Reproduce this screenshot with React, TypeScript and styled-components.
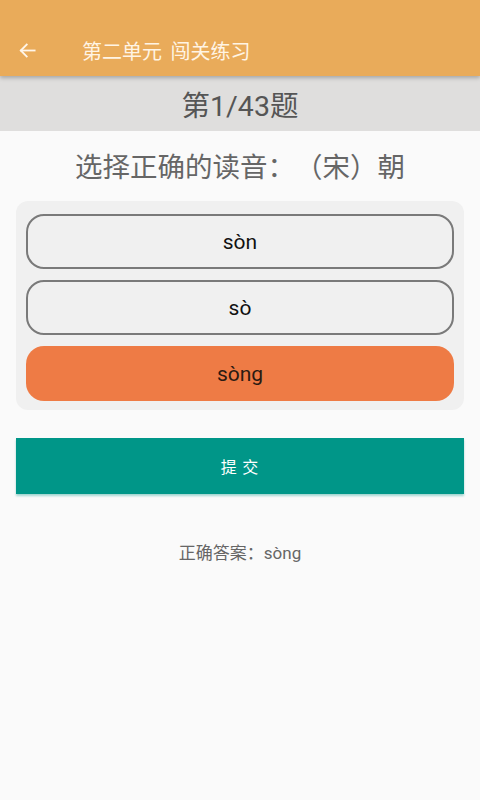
import React from "react";
import styled, { createGlobalStyle } from "styled-components";

const Global = createGlobalStyle`
  html, body { margin: 0; padding: 0; background: #fafafa; }
  body { font-family: Roboto, "Noto Sans CJK SC", sans-serif; text-spacing-trim: space-all; }
`;

const Page = styled.div`
  width: 480px;
  min-height: 800px;
  background: #fafafa;
  display: flex;
  flex-direction: column;
`;

const AppBar = styled.header`
  height: 76px;
  box-sizing: border-box;
  padding-top: 24px;
  background: #e9ab5a;
  display: flex;
  align-items: center;
  box-shadow: 0 2px 4px rgba(0, 0, 0, 0.25);
  position: relative;
  z-index: 1;
`;

const BackButton = styled.button`
  width: 56px;
  height: 52px;
  border: none;
  background: transparent;
  padding: 0 0 0 18px;
  display: flex;
  align-items: center;
  justify-content: flex-start;
  color: #fff6ea;
`;

const Title = styled.h1`
  margin: 0 0 0 26px;
  font-size: 20px;
  font-weight: 400;
  color: #fff4e4;
  word-spacing: 4px;
  font-family: "Noto Sans CJK SC", sans-serif;
`;

const Counter = styled.div`
  height: 55px;
  background: #dfdedd;
  display: flex;
  align-items: center;
  justify-content: center;
  font-size: 28.5px;
  color: #555;
  font-family: Roboto, "Noto Sans CJK SC", sans-serif;
`;

const Question = styled.div`
  margin-top: 15px;
  text-align: center;
  font-size: 27.5px;
  color: #666;
  line-height: 38px;
  text-spacing-trim: space-all;
  font-family: "Noto Sans CJK SC", sans-serif;
`;

const OptionsBox = styled.div`
  margin: 17px 16px 0;
  background: #f0f0f0;
  border-radius: 12px;
  padding: 13px 10px 9px;
  display: flex;
  flex-direction: column;
  gap: 11px;
`;

const Option = styled.div<{ $selected?: boolean }>`
  height: 55px;
  box-sizing: border-box;
  border-radius: 18px;
  border: ${(p) => (p.$selected ? "none" : "2px solid #7a7a7a")};
  background: ${(p) => (p.$selected ? "#ee7b45" : "#f0f0f0")};
  display: flex;
  align-items: center;
  justify-content: center;
  font-size: 21px;
  color: ${(p) => (p.$selected ? "#2a1a12" : "#111")};
  font-family: Roboto, sans-serif;
`;

const Submit = styled.button`
  margin: 28px 16px 0;
  height: 56px;
  border: none;
  border-radius: 0;
  background: #009688;
  color: #fff;
  font-size: 16px;
  letter-spacing: 1px;
  white-space: pre;
  font-family: "Noto Sans CJK SC", sans-serif;
  box-shadow: 0 2px 2px rgba(0, 150, 136, 0.35);
`;

const Answer = styled.div`
  margin-top: 45px;
  text-align: center;
  font-size: 17px;
  color: #666;
  text-spacing-trim: space-all;
  font-family: Roboto, "Noto Sans CJK SC", sans-serif;
`;

export default function App() {
  const options = ["sòn", "sò", "sòng"];
  const selected = 2;
  return (
    <Page>
      <Global />
      <AppBar>
        <BackButton aria-label="back">
          <svg width="19" height="19" viewBox="0 0 24 24" fill="none" stroke="currentColor" strokeWidth="2.3" strokeLinecap="square">
            <path d="M21 12H4" />
            <path d="M11 4.5L3.5 12L11 19.5" />
          </svg>
        </BackButton>
        <Title>第二单元 闯关练习</Title>
      </AppBar>
      <Counter>第1/43题</Counter>
      <Question>选择正确的读音：（宋）朝</Question>
      <OptionsBox>
        {options.map((o, i) => (
          <Option key={o} $selected={i === selected}>
            {o}
          </Option>
        ))}
      </OptionsBox>
      <Submit>提 交</Submit>
      <Answer>正确答案：sòng</Answer>
    </Page>
  );
}
